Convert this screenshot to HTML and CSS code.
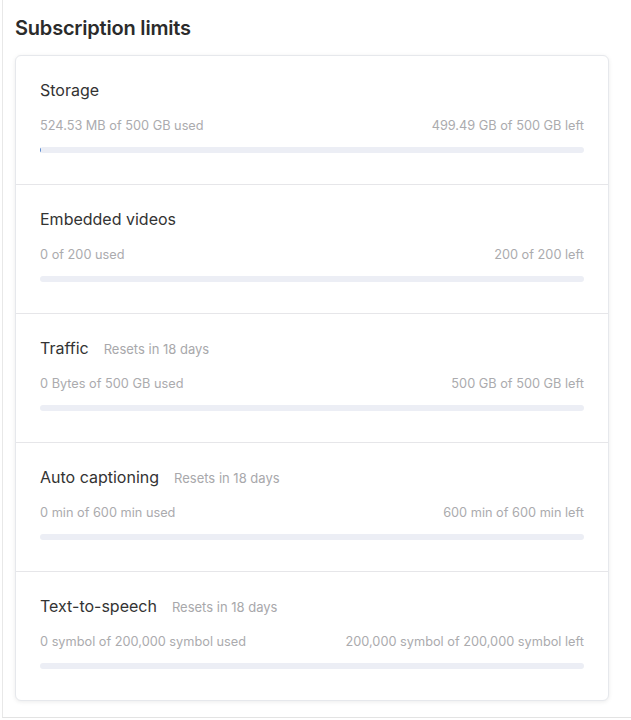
FILE: index.html
```html
<!DOCTYPE html>
<html>
    <head>
        <title>subscription limits</title>
        <meta name='viewport' content='width=device-width, initial-scale=1.0'>
        <link rel="stylesheet" href="styles.css">
    </head>
    <body>
        <div class="page">
            <h1>Subscription limits</h1>
            <div class="card">
                <div class="limit">
                    <div class="limit-head">
                        <span class="limit-name">Storage</span>
                    </div>
                    <div class="limit-stats">
                        <span>524.53 MB of 500 GB used</span>
                        <span>499.49 GB of 500 GB left</span>
                    </div>
                    <div class="bar"><div class="bar-fill" style="width: 0.2%"></div></div>
                </div>
                <div class="limit">
                    <div class="limit-head">
                        <span class="limit-name">Embedded videos</span>
                    </div>
                    <div class="limit-stats">
                        <span>0 of 200 used</span>
                        <span>200 of 200 left</span>
                    </div>
                    <div class="bar"></div>
                </div>
                <div class="limit">
                    <div class="limit-head">
                        <span class="limit-name">Traffic</span>
                        <span class="limit-reset">Resets in 18 days</span>
                    </div>
                    <div class="limit-stats">
                        <span>0 Bytes of 500 GB used</span>
                        <span>500 GB of 500 GB left</span>
                    </div>
                    <div class="bar"></div>
                </div>
                <div class="limit">
                    <div class="limit-head">
                        <span class="limit-name">Auto captioning</span>
                        <span class="limit-reset">Resets in 18 days</span>
                    </div>
                    <div class="limit-stats">
                        <span>0 min of 600 min used</span>
                        <span>600 min of 600 min left</span>
                    </div>
                    <div class="bar"></div>
                </div>
                <div class="limit">
                    <div class="limit-head">
                        <span class="limit-name">Text-to-speech</span>
                        <span class="limit-reset">Resets in 18 days</span>
                    </div>
                    <div class="limit-stats">
                        <span>0 symbol of 200,000 symbol used</span>
                        <span>200,000 symbol of 200,000 symbol left</span>
                    </div>
                    <div class="bar"></div>
                </div>
            </div>
        </div>
    </body>
</html>
```
FILE: styles.css
```css
* {
    margin: 0px;
    padding: 0px;
    box-sizing: border-box;
}
body {
    font-family: Inter, "Noto Sans", sans-serif;
    background: #fff;
    color: #333;
}
.page {
    margin-left: 2px;
    height: 718px;
    border-left: 1px solid #e8e8e8;
    border-bottom: 1px solid #e3e3e3;
    padding: 16px 20px 0 12px;
}
h1 {
    font-size: 20px;
    font-weight: 600;
    line-height: 24px;
    color: #2b2b2b;
    letter-spacing: -0.2px;
    margin-bottom: 15px;
}
.card {
    width: 594px;
    border: 1px solid #e6e8ec;
    border-radius: 6px;
    box-shadow: 0 1px 4px rgba(0, 0, 0, 0.08);
    background: #fff;
}
.limit {
    padding: 24px 24px 31px;
    border-bottom: 1px solid #e6e6e9;
}
.limit:last-child {
    border-bottom: none;
}
.limit-head {
    display: flex;
    align-items: baseline;
    gap: 15px;
    height: 20px;
    line-height: 20px;
}
.limit-name {
    font-size: 16px;
    color: #333;
}
.limit-reset {
    font-size: 13px;
    color: #a8a8ab;
}
.limit-stats {
    display: flex;
    justify-content: space-between;
    margin-top: 18px;
    font-size: 12.75px;
    line-height: 16px;
    color: #ababae;
}
.bar {
    margin-top: 13px;
    height: 6px;
    border-radius: 3px;
    background: #eceef5;
    overflow: hidden;
}
.bar-fill {
    height: 100%;
    min-width: 1px;
    background: #5a8bd0;
}
```
